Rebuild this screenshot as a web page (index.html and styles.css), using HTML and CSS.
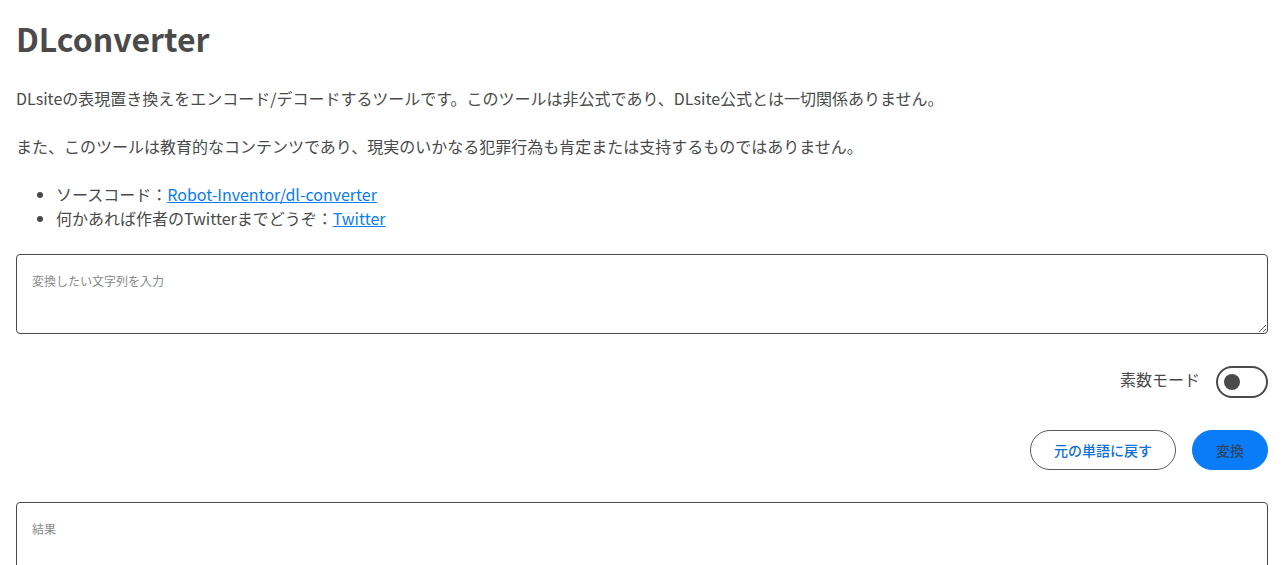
FILE: index.html
```html
<!DOCTYPE html>
<html lang="ja">
<head>
<meta charset="utf-8">
<title>DLconverter</title>
<link rel="stylesheet" href="styles.css">
</head>
<body>
<main class="page">
  <h1 class="title">DLconverter</h1>
  <p class="text">DLsiteの表現置き換えをエンコード/デコードするツールです。このツールは非公式であり、DLsite公式とは一切関係ありません。</p>
  <p class="text">また、このツールは教育的なコンテンツであり、現実のいかなる犯罪行為も肯定または支持するものではありません。</p>
  <ul class="links">
    <li>ソースコード：<a href="#">Robot-Inventor/dl-converter</a></li>
    <li>何かあれば作者のTwitterまでどうぞ：<a href="#">Twitter</a></li>
  </ul>
  <textarea class="box" placeholder="変換したい文字列を入力"></textarea>
  <div class="toggle-row">
    <span class="toggle-label">素数モード</span>
    <span class="switch"><span class="knob"></span></span>
  </div>
  <div class="button-row">
    <button class="btn btn-outline">元の単語に戻す</button>
    <button class="btn btn-primary">変換</button>
  </div>
  <textarea class="box" placeholder="結果"></textarea>
</main>
</body>
</html>
```
FILE: styles.css
```css
html, body {
  margin: 0;
  padding: 0;
  background: #fff;
}
body {
  font-family: "Noto Sans CJK JP", "Noto Sans", sans-serif;
  color: #4a4a4a;
  font-size: 16px;
  line-height: 24px;
}
.page {
  padding: 0 16px;
  display: flex;
  flex-direction: column;
}
.title {
  font-size: 32px;
  font-weight: 700;
  line-height: 40px;
  margin: 18px 0 28px;
  color: #4a4a4a;
}
.text {
  margin: 0 0 24px;
}
.links {
  margin: 0 0 24px;
  padding-left: 40px;
}
.links a {
  color: #0a7bf0;
}
.box {
  display: block;
  box-sizing: border-box;
  width: 100%;
  height: 80px;
  border: 1px solid #4a4a4a;
  border-radius: 4px;
  padding: 17px 15px;
  font-family: "Noto Sans CJK JP", sans-serif;
  font-size: 12px;
  line-height: 18px;
  color: #4a4a4a;
  resize: vertical;
  margin: 0;
}
.box::placeholder {
  color: #8a8a8a;
}
.toggle-row {
  display: flex;
  justify-content: flex-end;
  align-items: center;
  gap: 16px;
  margin-top: 32px;
  height: 32px;
}
.toggle-label {
  font-size: 16px;
  position: relative;
  top: -3px;
}
.switch {
  box-sizing: border-box;
  width: 52px;
  height: 32px;
  border: 2px solid #4a4a4a;
  border-radius: 16px;
  display: flex;
  align-items: center;
  padding-left: 6px;
}
.knob {
  width: 16px;
  height: 16px;
  border-radius: 50%;
  background: #4a4a4a;
}
.button-row {
  display: flex;
  justify-content: flex-end;
  gap: 16px;
  margin: 32px 0;
}
.btn {
  height: 40px;
  border-radius: 20px;
  font-family: "Noto Sans CJK JP", sans-serif;
  font-size: 14px;
  font-weight: 500;
  padding: 0 23px;
  cursor: pointer;
}
.btn-outline {
  background: #fff;
  border: 1px solid #5a5a5a;
  color: #0a6fd8;
}
.btn-primary {
  background: #0a7cf7;
  border: 1px solid #0a7cf7;
  color: #2a4766;
}
```
